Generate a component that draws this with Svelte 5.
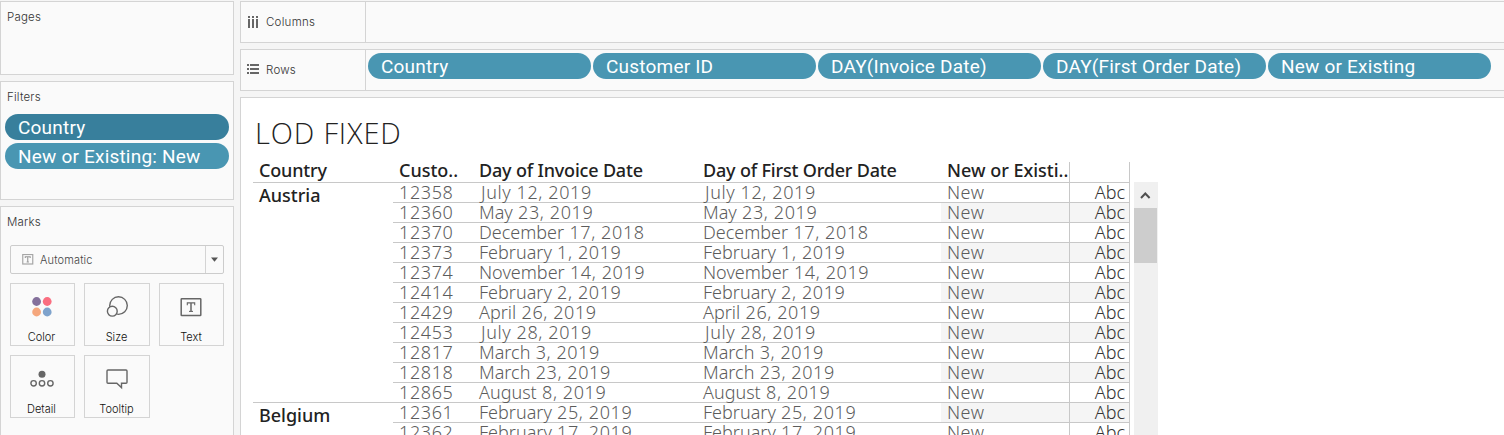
<script>
  const filters = [
    { label: 'Country', dark: true },
    { label: 'New or Existing: New', dark: false },
  ];
  const rowPills = ['Country', 'Customer ID', 'DAY(Invoice Date)', 'DAY(First Order Date)', 'New or Existing'];
  const groups = [
    {
      country: 'Austria',
      rows: [
        ['12358', 'July', '12, 2019'],
        ['12360', 'May', '23, 2019'],
        ['12370', 'December', '17, 2018'],
        ['12373', 'February', '1, 2019'],
        ['12374', 'November', '14, 2019'],
        ['12414', 'February', '2, 2019'],
        ['12429', 'April', '26, 2019'],
        ['12453', 'July', '28, 2019'],
        ['12817', 'March', '3, 2019'],
        ['12818', 'March', '23, 2019'],
        ['12865', 'August', '8, 2019'],
      ],
    },
    {
      country: 'Belgium',
      rows: [
        ['12361', 'February', '25, 2019'],
        ['12362', 'February', '17, 2019'],
      ],
    },
  ];
  const marks = ['Color', 'Size', 'Text', 'Detail', 'Tooltip'];
</script>

<div class="app">
  <aside>
    <section class="card pages"><h2>Pages</h2></section>
    <section class="card filters">
      <h2>Filters</h2>
      <div class="filter-list">
        {#each filters as f}
          <div class="pill" class:dark={f.dark}><span>{f.label}</span></div>
        {/each}
      </div>
    </section>
    <section class="card marks">
      <h2>Marks</h2>
      <div class="select">
        <svg width="12" height="11" viewBox="0 0 12 11">
          <rect x="0.75" y="0.5" width="10" height="9.5" fill="none" stroke="#a6a6a6" stroke-width="1.2" />
          <path d="M3.3 4V2.8H8.2V4M5.75 2.8V8M4.6 8H6.9" fill="none" stroke="#999" stroke-width="1.1" />
        </svg>
        <span>Automatic</span>
        <div class="arrow"><svg width="7" height="5"><path d="M0 0.5H7L3.5 4.7Z" fill="#555" /></svg></div>
      </div>
      <div class="grid">
        {#each marks as m}
          <div class="mark">
            <svg width="32" height="32" viewBox="0 0 32 32" fill="none" stroke="#666" stroke-width="1.4">
              {#if m === 'Color'}
                <g stroke="none">
                  <circle cx="10.6" cy="10.5" r="4.4" fill="#84709b" />
                  <circle cx="21.2" cy="10.5" r="4.4" fill="#fa6e80" />
                  <circle cx="10.6" cy="21" r="4.4" fill="#f5a77d" />
                  <circle cx="21.2" cy="21" r="4.4" fill="#7fa3cc" />
                </g>
              {:else if m === 'Size'}
                <circle cx="17.5" cy="14.6" r="8.8" />
                <circle cx="11.3" cy="20.2" r="4.9" fill="#fafafa" />
              {:else if m === 'Text'}
                <rect x="6.2" y="7.7" width="19.6" height="16.8" rx="0.6" stroke-width="1.5" />
                <path d="M12.3 14.2V11.9H19.7V14.2" stroke-width="1.1" />
                <path d="M16 11.9V20" stroke-width="1.5" />
                <path d="M14 20.4H18" stroke-width="1.1" />
              {:else if m === 'Detail'}
                <circle cx="16" cy="11.3" r="3.5" fill="#666" stroke="none" />
                <circle cx="7.6" cy="20.3" r="2.7" />
                <circle cx="16" cy="20.3" r="2.7" />
                <circle cx="24.4" cy="20.3" r="2.7" />
              {:else}
                <path d="M7 7H25Q26 7 26 8V19.2Q26 20.2 25 20.2H20.5V24.6L15.8 20.2H7Q6 20.2 6 19.2V8Q6 7 7 7Z" />
              {/if}
            </svg>
            <span>{m}</span>
          </div>
        {/each}
      </div>
    </section>
  </aside>

  <main>
    <div class="shelf">
      <div class="shelf-name">
        <svg width="12" height="12" fill="#666"><path d="M1 0h2v2h-2zM5 0h2v2h-2zM9 0h2v2h-2zM1 3h2v9h-2zM5 3h2v9h-2zM9 3h2v9h-2z" /></svg>
        <span>Columns</span>
      </div>
    </div>
    <div class="shelf rows">
      <div class="shelf-name">
        <svg width="12" height="12" fill="#666"><path d="M0 0h2v2h-2zM0 4h2v2h-2zM0 8h2v2h-2zM3 0h9v2h-9zM3 4h9v2h-9zM3 8h9v2h-9z" /></svg>
        <span>Rows</span>
      </div>
      <div class="pills">
        {#each rowPills as p}
          <div class="pill"><span>{p}</span></div>
        {/each}
      </div>
    </div>
    <div class="viz">
      <h1>LOD FIXED</h1>
      <div class="sheet">
        <div class="table">
          <div class="head">
            <div>Country</div>
            <div class="cust">Custo..</div>
            <div>Day of Invoice Date</div>
            <div>Day of First Order Date</div>
            <div class="state">New or Existi..</div>
            <div class="abc"></div>
          </div>
          {#each groups as g}
            <div class="group">
              <div class="country">{g.country}</div>
              <div class="lines">
                {#each g.rows as [id, month, rest]}
                  <div class="line">
                    <div class="digits">{id}</div>
                    <div><span class:july={month === 'July'}>{month}</span><span class="digits">{' ' + rest}</span></div>
                    <div><span class:july={month === 'July'}>{month}</span><span class="digits">{' ' + rest}</span></div>
                    <div class="state">New</div>
                    <div class="abc">Abc</div>
                  </div>
                {/each}
              </div>
            </div>
          {/each}
        </div>
        <div class="scroll">
          <svg width="24" height="26"><path d="M7 16L11.3 11.5L15.6 16" fill="none" stroke="#505050" stroke-width="2" /></svg>
          <div class="thumb"></div>
        </div>
      </div>
    </div>
  </main>
</div>

<style>
  :global(body) { overflow: hidden; }
  .app {
    display: flex;
    gap: 6px;
    width: 1504px;
    height: 435px;
    overflow: hidden;
    background: #f5f5f5;
    font-family: "Open Sans", sans-serif;
    color: #4a4a4a;
  }
  .app * { box-sizing: border-box; }
  svg { display: block; flex: none; }
  h1, h2 { margin: 0; font-weight: 400; }
  aside { width: 234px; flex: none; display: flex; flex-direction: column; gap: 6px; padding-top: 1px; }
  .card { border: 1px solid #d4d4d4; background: #fafafa; flex: none; }
  .pages { height: 74px; }
  .filters { height: 119px; }
  .marks { height: 240px; }
  h2 { font: 300 11.5px/16px Inter, sans-serif; letter-spacing: 0.2px; padding: 7px 6px 0; color: #333; }
  .filter-list { display: flex; flex-direction: column; gap: 3px; padding: 9px 4px 0; }
  .pill {
    height: 26px;
    border-radius: 13px;
    background: #4996b2;
    color: #fff;
    padding-left: 13px;
    font: 400 19px/28px Roboto, sans-serif;
    letter-spacing: 0.2px;
    white-space: nowrap;
  }
  .dark { background: #387f9c; }
  .select {
    display: flex;
    align-items: center;
    width: 214px;
    height: 29px;
    margin: 15px 0 0 9px;
    padding-left: 11px;
    border: 1px solid #ccc;
    border-radius: 2px;
    font: 300 11px/16px Inter, sans-serif;
    letter-spacing: 0.15px;
    color: #444;
  }
  .select > span { margin-left: 6px; }
  .arrow { margin-left: auto; width: 18px; height: 27px; border-left: 1px solid #d4d4d4; display: grid; place-items: center; }
  .grid { display: grid; grid-template-columns: 65px 66px 65px; gap: 9px; margin: 9px 0 0 9px; }
  .mark {
    height: 63px;
    border: 1px solid #d4d4d4;
    display: flex;
    flex-direction: column;
    align-items: center;
    padding: 7px 1px 0 0;
    font: 300 11px/16px Inter, sans-serif;
    color: #111;
  }
  .mark:first-child, .mark:nth-child(4) { padding-right: 2px; }
  .mark span { margin-top: 6px; }
  main { flex: 1; min-width: 0; display: flex; flex-direction: column; gap: 6px; padding-top: 1px; }
  .shelf { display: flex; flex: none; height: 42px; border: solid #d4d4d4; border-width: 1px 0 1px 1px; background: #fafafa; }
  .shelf-name {
    width: 125px;
    flex: none;
    display: flex;
    align-items: center;
    gap: 7px;
    padding-left: 6px;
    border-right: 1px solid #d4d4d4;
    font: 300 11.5px/16px Inter, sans-serif;
    letter-spacing: 0.25px;
    color: #333;
  }
  .pills { display: flex; gap: 2px; padding: 3px 0 0 2px; }
  .pills .pill { width: 223px; }
  .viz { flex: 1; border: solid #d4d4d4; border-width: 1px 0 0 1px; background: #fff; overflow: hidden; padding-left: 12px; }
  h1 { font: 300 29px/40px "Open Sans", sans-serif; letter-spacing: 0.85px; color: #222; height: 64px; padding: 15px 0 0 2px; white-space: nowrap; }
  .sheet { display: flex; gap: 4px; }
  .table { width: 877px; font: 300 18px/18px "Noto Sans", sans-serif; color: #5c5c5c; white-space: nowrap; }
  .digits { letter-spacing: 0.6px; }
  .july { margin-left: 2px; letter-spacing: 0.6px; }
  .head {
    display: grid;
    grid-template-columns: 140px 80px 224px 224px 149px 60px;
    height: 21px;
    line-height: 16px;
    font-weight: 500;
    letter-spacing: -0.18px;
    color: #222;
    border-bottom: 1px solid #c8c8c8;
  }
  .head > div { padding-left: 6px; }
  .head .cust { letter-spacing: 0; }
  .group { display: flex; border-bottom: 1px solid #c8c8c8; }
  .country { width: 140px; padding: 3px 0 0 6px; font-weight: 500; color: #222; }
  .line { display: grid; grid-template-columns: 80px 224px 224px 149px 60px; height: 20px; border-bottom: 1px solid #c8c8c8; }
  .line:last-child { height: 19px; border-bottom: 0; }
  .line > div { padding-left: 6px; height: 19px; }
  .group:nth-child(2) .line:nth-child(even) .abc,
  .group:nth-child(3) .line:nth-child(odd) .abc { background: #f5f5f5; }
  .group:nth-child(2) .line:nth-child(even) .state,
  .group:nth-child(3) .line:nth-child(odd) .state { background: linear-gradient(90deg, transparent 20px, #f5f5f5 20px); }
  .app .head .state, .app .line .state { padding-left: 26px; border-right: 1px solid #c8c8c8; }
  .head .state { letter-spacing: 0; }
  .line .state { letter-spacing: 0.5px; }
  .abc { border-right: 1px solid #c8c8c8; text-align: right; padding-right: 4px; color: #333; }
  .scroll { width: 24px; height: 260px; margin-top: 20px; background: #f0f0f0; }
  .thumb { width: 23px; height: 55px; background: #cdcdcd; }
</style>
